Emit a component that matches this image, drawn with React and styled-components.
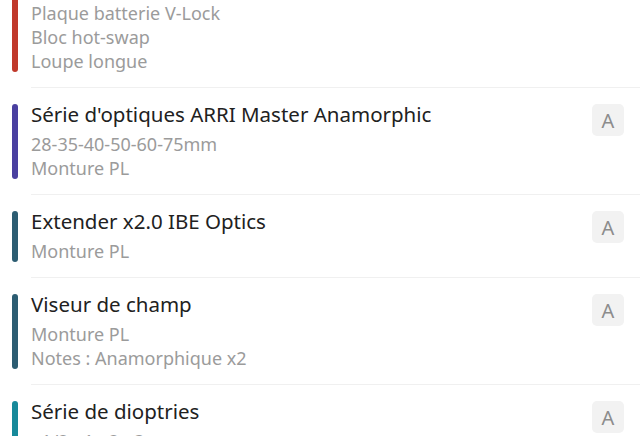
import React from "react";
import styled, { createGlobalStyle } from "styled-components";

const Global = createGlobalStyle`
  html, body { margin: 0; padding: 0; background: #ffffff; }
  body { font-family: "Noto Sans", "Roboto", sans-serif; overflow: hidden; }
`;

const Viewport = styled.div`
  width: 640px;
  height: 436px;
  overflow: hidden;
  background: #ffffff;
`;

const List = styled.ul`
  list-style: none;
  margin: ${(p) => p.$offset}px 0 0;
  padding: 0;
`;

const Row = styled.li`
  display: flex;
  align-items: stretch;
  padding-left: 12px;
`;

const Accent = styled.div`
  flex: 0 0 6px;
  margin: 16px 0 16px;
  border-radius: 3px;
  background: ${(p) => p.$color};
`;

const Body = styled.div`
  flex: 1;
  display: flex;
  align-items: flex-start;
  gap: 12px;
  margin-left: 13px;
  padding: 16px 16px 15px 0;
  border-bottom: 1px solid #f0f0f0;
`;

const Texts = styled.div`
  flex: 1;
  min-width: 0;
  display: flex;
  flex-direction: column;
  gap: 2px;
`;

const Title = styled.div`
  font-size: 20.5px;
  line-height: 20px;
  margin-bottom: 7px;
  color: #212121;
  white-space: nowrap;
`;

const Line = styled.div`
  font-size: 18px;
  line-height: 22px;
  color: #9b9b9b;
  white-space: nowrap;
`;

const Badge = styled.div`
  flex: 0 0 32px;
  height: 32px;
  border-radius: 5px;
  background: #f2f2f2;
  color: #8c8c8c;
  font-size: 20px;
  display: flex;
  align-items: center;
  justify-content: center;
`;

const items = [
  {
    color: "#c0392b",
    title: "Corps caméra ARRI Alexa Mini LF",
    lines: ["Monture LPL", "Plaque batterie V-Lock", "Bloc hot-swap", "Loupe longue"],
    badge: "A",
  },
  {
    color: "#4a40a0",
    title: "Série d'optiques ARRI Master Anamorphic",
    lines: ["28-35-40-50-60-75mm", "Monture PL"],
    badge: "A",
  },
  {
    color: "#2c5d72",
    title: "Extender x2.0 IBE Optics",
    lines: ["Monture PL"],
    badge: "A",
  },
  {
    color: "#2c5d72",
    title: "Viseur de champ",
    lines: ["Monture PL", "Notes : Anamorphique x2"],
    badge: "A",
  },
  {
    color: "#17899a",
    title: "Série de dioptries",
    lines: ["+1/2 +1 +2 +3", "Monture PL"],
    badge: "A",
  },
];

export default function App() {
  return (
    <Viewport>
      <Global />
      <List $offset={-67}>
        {items.map((it, i) => (
          <Row key={i}>
            <Accent $color={it.color} />
            <Body>
              <Texts>
                <Title>{it.title}</Title>
                {it.lines.map((l, j) => (
                  <Line key={j}>{l}</Line>
                ))}
              </Texts>
              <Badge>{it.badge}</Badge>
            </Body>
          </Row>
        ))}
      </List>
    </Viewport>
  );
}
